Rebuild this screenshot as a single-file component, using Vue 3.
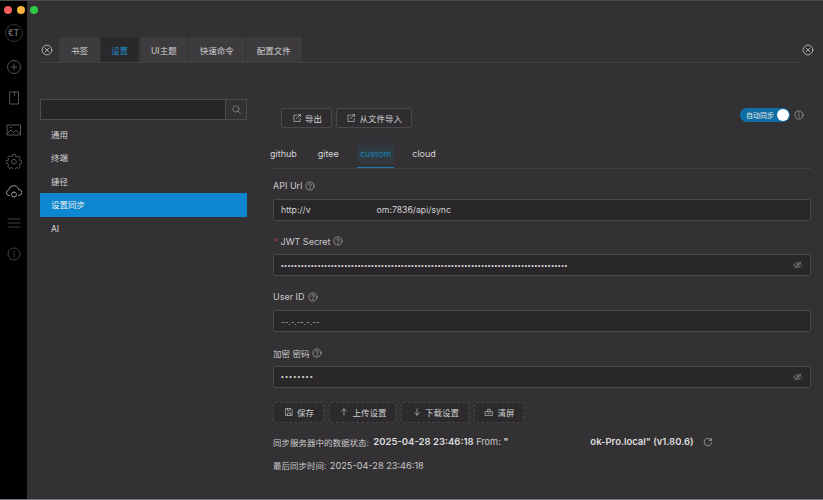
<script setup>
const sideIcons = [
  { d: 'M1.500 8a6.500 6.500 0 1 0 13 0a6.500 6.500 0 1 0-13 0M8 5v6M5 8h6' },
  { d: 'M4 2h8.500v12H4zM8.500 2v3.500' },
  { d: 'M1.500 3h13v10h-13zM1.500 11.500l3.500-3.500 2.500 2.500 2.500-2 4.500 3.500M4.500 5.500h1' },
  { d: 'M6.800 1.500h2.400l.4 1.800 1.400.6 1.600-1 1.700 1.700-1 1.600.6 1.400 1.800.4v2.400l-1.800.4-.6 1.400 1 1.600-1.700 1.700-1.600-1-1.400.6-.4 1.800H6.800l-.4-1.800-1.400-.6-1.600 1-1.700-1.700 1-1.600-.6-1.400-1.800-.4V7.800l1.800-.4.6-1.400-1-1.600 1.700-1.700 1.600 1 1.400-.6zM8 6.300a2.400 2.400 0 1 0 0 4.800a2.400 2.400 0 1 0 0-4.800' },
  { d: 'M3.500 11.500H3a2.800 2.800 0 0 1-.3-5.500A5 5 0 0 1 12.500 5.500a2.800 2.800 0 0 1 .5 6h-.5M8 8a2.500 2.500 0 1 0 0 5a2.500 2.500 0 1 0 0-5', active: true },
  { d: 'M2 4h12M2 8h12M2 12h12', dim: true },
  { d: 'M2 8a6 6 0 1 0 12 0a6 6 0 1 0-12 0M8 7.500v3.500M8 5v.8', dim: true }
]
const tabs = ['书签', '设置', 'UI主题', '快速命令', '配置文件']
const menu = ['通用', '终端', '捷径', '设置同步', 'AI']
const providers = ['github', 'gitee', 'custom', 'cloud']
const secret = '•'.repeat(86)
const password = '•'.repeat(8)
const actions = [
  { label: '保存', d: 'M3 2.500h8l2 2v9H3zM5.500 2.500v3h4v-3M5.500 13.500v-4h5v4' },
  { label: '上传设置', d: 'M8 13V3M4 7l4-4 4 4' },
  { label: '下载设置', d: 'M8 3v10M4 9l4 4 4-4' },
  { label: '清屏', d: 'M2.500 7h11v6.500h-11zM6 7V3.500h4V7M6 10h4' }
]
</script>

<template>
  <div class="window">
    <div class="lights">
      <i class="red" />
      <i class="yellow" />
      <i class="green" />
    </div>
    <aside class="rail">
      <div class="logo">€T</div>
      <svg v-for="ic in sideIcons" :key="ic.d" class="rail-icon" :class="{ active: ic.active, dim: ic.dim }" viewBox="0 0 16 16">
        <path :d="ic.d" />
      </svg>
    </aside>
    <main class="main">
      <header class="tabbar">
        <svg class="close" viewBox="0 0 16 16">
          <circle cx="8" cy="8" r="6.500" />
          <path d="M5.500 5.500l5 5M10.500 5.500l-5 5" />
        </svg>
        <div class="tabs">
          <div v-for="t in tabs" :key="t" class="tab" :class="{ active: t === '设置' }">{{ t }}</div>
        </div>
        <svg class="close close-right" viewBox="0 0 16 16">
          <circle cx="8" cy="8" r="6.500" />
          <path d="M5.500 5.500l5 5M10.500 5.500l-5 5" />
        </svg>
      </header>

      <div class="body">
        <nav class="left">
          <div class="search">
            <div class="search-input" />
            <div class="search-btn">
              <svg viewBox="0 0 16 16"><circle cx="7" cy="7" r="4.500" /><path d="M10.500 10.500l3.500 3.500" /></svg>
            </div>
          </div>
          <ul class="menu">
            <li v-for="m in menu" :key="m" :class="{ selected: m === '设置同步' }">{{ m }}</li>
          </ul>
        </nav>

        <section class="right">
          <div class="toolbar">
            <div class="toolbar-btns">
              <button class="btn solid">
                <svg viewBox="0 0 16 16"><path d="M13 9v4.500H3v-10h5M7 9l6.500-6.500M10 2.500h3.500V6" /></svg>导出
              </button>
              <button class="btn solid">
                <svg viewBox="0 0 16 16"><path d="M13 9v4.500H3v-10h5M7 9l6.500-6.500M10 2.500h3.500V6" /></svg>从文件导入
              </button>
            </div>
            <div class="auto-sync">
              <div class="switch"><span>自动同步</span><i /></div>
              <svg class="hint" viewBox="0 0 16 16"><circle cx="8" cy="8" r="6.500" /><path d="M8 7.500v3.500M8 4.500v1" /></svg>
            </div>
          </div>

          <div class="providers">
            <div v-for="p in providers" :key="p" class="provider" :class="{ active: p === 'custom' }">{{ p }}</div>
          </div>

          <form class="form" @submit.prevent>
            <label>API Url<svg class="help" viewBox="0 0 16 16"><circle cx="8" cy="8" r="6.500" /><path d="M6 6.300a2 2 0 1 1 3 1.700c-.7.400-1 .8-1 1.500M8 11.300v.8" /></svg></label>
            <div class="field">http://v<span class="mask url-mask" />om:7836/api/sync</div>

            <label><em>*</em>JWT Secret<svg class="help" viewBox="0 0 16 16"><circle cx="8" cy="8" r="6.500" /><path d="M6 6.300a2 2 0 1 1 3 1.700c-.7.400-1 .8-1 1.500M8 11.300v.8" /></svg></label>
            <div class="field secret">
              <span class="dots">{{ secret }}</span>
              <svg class="eye" viewBox="0 0 16 16"><path d="M1.500 8s2.500-4 6.500-4 6.500 4 6.500 4-2.500 4-6.500 4-6.500-4-6.500-4zM6 8a2 2 0 1 0 4 0a2 2 0 1 0-4 0M3 13L13 3" /></svg>
            </div>

            <label>User ID<svg class="help" viewBox="0 0 16 16"><circle cx="8" cy="8" r="6.500" /><path d="M6 6.300a2 2 0 1 1 3 1.700c-.7.400-1 .8-1 1.500M8 11.300v.8" /></svg></label>
            <div class="field"><span class="scrap">--.-.--.-.--</span></div>

            <label class="cjk">加密 密码<svg class="help" viewBox="0 0 16 16"><circle cx="8" cy="8" r="6.500" /><path d="M6 6.300a2 2 0 1 1 3 1.700c-.7.400-1 .8-1 1.500M8 11.300v.8" /></svg></label>
            <div class="field secret">
              <span class="dots wide">{{ password }}</span>
              <svg class="eye" viewBox="0 0 16 16"><path d="M1.500 8s2.500-4 6.500-4 6.500 4 6.500 4-2.500 4-6.500 4-6.500-4-6.500-4zM6 8a2 2 0 1 0 4 0a2 2 0 1 0-4 0M3 13L13 3" /></svg>
            </div>
          </form>

          <div class="actions">
            <button v-for="a in actions" :key="a.label" class="btn dashed">
              <svg viewBox="0 0 16 16"><path :d="a.d" /></svg>{{ a.label }}
            </button>
          </div>

          <p class="status">
            <span class="cjk">同步服务器中的数据状态: </span><b class="date">2025-04-28 23:46:18</b> From: <b>"<span class="mask from-mask" />ok-Pro.local" (v1.80.6)</b>
            <svg class="refresh" viewBox="0 0 16 16"><path d="M13 5a6 6 0 1 0 .8 4M13.500 2v3.500H10" /></svg>
          </p>
          <p class="last"><span class="cjk">最后同步时间: </span>2025-04-28 23:46:18</p>
        </section>
      </div>
    </main>
  </div>
</template>

<style>
html, body {
  margin: 0;
  background: #333134;
}
</style>

<style scoped>
.window {
  display: flex;
  width: 823px;
  height: 500px;
  overflow: hidden;
  position: relative;
  background: #333134;
  color: #d6d6d6;
  font-family: "Inter", "Noto Sans CJK SC", sans-serif;
  font-size: 8.500px;
  box-sizing: border-box;
  border-top: 1px solid #4a484b;
  border-bottom: 1px solid #77767a;
}

svg {
  fill: none;
  stroke: currentColor;
  stroke-width: 1;
  stroke-linecap: round;
  stroke-linejoin: round;
  flex: none;
}

.cjk {
  font-size: 8.500px;
}

.lights {
  position: absolute;
  left: 4px;
  top: 5px;
  display: flex;
  gap: 5px;
  z-index: 1;
}

.lights i {
  width: 8px;
  height: 8px;
  border-radius: 50%;
}

.red { background: #ee5f5b; }
.yellow { background: #f4b63c; }
.green { background: #33c748; }

.rail {
  width: 27px;
  flex: none;
  background: #000;
  display: flex;
  flex-direction: column;
  align-items: center;
  padding-top: 23px;
  gap: 15.200px;
  color: #565656;
  box-sizing: border-box;
}

.logo {
  width: 18px;
  height: 18px;
  border: 1px solid #333;
  border-radius: 50%;
  box-sizing: border-box;
  display: flex;
  align-items: center;
  justify-content: center;
  font-size: 8.500px;
  font-weight: 700;
  color: #666;
  margin-bottom: 2px;
}

.rail-icon {
  width: 16px;
  height: 16px;
}

.rail-icon.active {
  color: #999;
}

.rail-icon.dim {
  color: #3f3f3f;
}

.main {
  flex: 1;
  min-width: 0;
}

.tabbar {
  display: flex;
  align-items: center;
  margin: 36px 22px 0 14px;
  height: 25px;
  position: relative;
  border-bottom: 1px solid #413f42;
}

.close {
  width: 12px;
  height: 12px;
  color: #d0d0d0;
}

.close-right {
  position: absolute;
  right: -13px;
  top: 7px;
}

.tabs {
  display: flex;
  gap: 1px;
  margin-left: 6px;
  align-self: stretch;
}

.tab {
  display: flex;
  align-items: center;
  justify-content: center;
  background: #3d3b3e;
  padding: 0 11px;
  color: #cfcfcf;
  border-radius: 2px 2px 0 0;
}

.tab:first-child {
  padding: 0 12px;
}

.tab.active {
  background: #2a282b;
  color: #1a8ec8;
  padding: 0 10px;
  margin-right: 1px;
}

.body {
  display: flex;
  padding-left: 13px;
  margin-top: 36px;
}

.left {
  width: 207px;
  flex: none;
}

.search {
  display: flex;
  height: 21px;
  border: 1px solid #4d4b4e;
  box-sizing: border-box;
}

.search-input {
  flex: 1;
  background: #272528;
}

.search-btn {
  width: 20px;
  border-left: 1px solid #4d4b4e;
  display: flex;
  align-items: center;
  justify-content: center;
  color: #8f8f8f;
}

.search-btn svg {
  width: 11px;
  height: 11px;
}

.menu {
  list-style: none;
  margin: 3px 0 0;
  padding: 0;
}

.menu li {
  height: 23.400px;
  line-height: 25px;
  padding-left: 11px;
  color: #d8d8d8;
}

.menu li.selected {
  background: #0c86cf;
  color: #f2f2f2;
}

.right {
  width: 541px;
  margin-left: 23px;
  flex: none;
}

.toolbar {
  display: flex;
  justify-content: space-between;
  align-items: flex-start;
  padding: 9px 7px 0 11px;
  height: 32px;
}

.toolbar-btns {
  display: flex;
  gap: 4px;
}

.btn {
  display: flex;
  align-items: center;
  justify-content: center;
  gap: 3.500px;
  height: 20px;
  padding: 0 8.500px 0 9.500px;
  background: #2f2d30;
  border: 1px solid #49474a;
  border-radius: 2px;
  color: #d0d0d0;
  font: inherit;
}

.btn svg {
  width: 10px;
  height: 10px;
}

.auto-sync {
  display: flex;
  align-items: center;
  gap: 4px;
  color: #bdbdbd;
}

.switch {
  display: flex;
  align-items: center;
  justify-content: space-between;
  width: 50px;
  height: 14px;
  border-radius: 7px;
  background: #0f6ea6;
  color: #e8e8e8;
  font-size: 7px;
  padding: 0 1px 0 6px;
  box-sizing: border-box;
}

.switch span {
  white-space: nowrap;
}

.switch i {
  width: 12px;
  height: 12px;
  border-radius: 50%;
  background: #fff;
  flex: none;
}

.hint {
  width: 10px;
  height: 10px;
}

.providers {
  display: flex;
  gap: 21px;
  height: 29px;
  border-bottom: 1px solid #413f42;
  box-sizing: border-box;
  font-size: 9px;
  align-items: stretch;
}

.provider {
  display: flex;
  align-items: center;
  padding-bottom: 1px;
}

.provider.active {
  color: #1a7fae;
  border-bottom: 1px solid #1a7fae;
  padding: 0 3px;
  margin: 0 -3px;
  background: linear-gradient(#333134, #2f3d47 50%, #333134);
}

.form {
  padding-left: 3px;
}

.form label {
  display: flex;
  align-items: center;
  height: 13px;
  margin-top: 10px;
  color: #c9c9c9;
  font-size: 9px;
  margin-bottom: 6.500px;
}

.form label.cjk {
  font-size: 8.500px;
}

.form em {
  color: #b13a4a;
  margin-right: 3px;
  font-style: normal;
}

.help {
  width: 10px;
  height: 10px;
  margin-left: 3px;
  color: #bbb;
}

.field {
  display: flex;
  align-items: center;
  height: 22px;
  padding: 0 7px;
  background: #29272a;
  border: 1px solid #4a484b;
  border-radius: 2px;
  box-sizing: border-box;
  color: #d4d4d4;
  font-size: 8.700px;
  margin-bottom: 14.200px;
}

.form .field:last-child {
  margin-bottom: 0;
}

.mask {
  display: inline-block;
}

.url-mask {
  width: 66px;
}

.from-mask {
  width: 82px;
}

.secret {
  justify-content: space-between;
}

.dots {
  letter-spacing: 0.710px;
  font-size: 7.500px;
  white-space: nowrap;
  font-family: "Liberation Sans", sans-serif;
}

.dots.wide {
  letter-spacing: 1.500px;
}

.eye {
  width: 10px;
  height: 10px;
  color: #8a8a8a;
}

.scrap {
  font-size: 8px;
  color: #b0b0b0;
  padding-top: 3px;
}

.actions {
  display: flex;
  gap: 5px;
  margin-top: 14px;
  padding-left: 3px;
}

.btn.dashed {
  border: 1px dashed #474548;
  background: #2c2a2d;
  height: 21px;
}

.status,
.last {
  margin: 0;
  padding-left: 3px;
  color: #c9c9c9;
  white-space: nowrap;
  font-size: 9.200px;
}

.status {
  margin-top: 13px;
  display: flex;
  align-items: center;
  white-space: pre;
  height: 12px;
}

.status b {
  font-weight: 600;
  font-size: 9.500px;
  color: #dcdcdc;
}

.status .date {
  margin-left: 2px;
}

.refresh {
  width: 10px;
  height: 10px;
  margin-left: 9px;
}

.last {
  margin-top: 11px;
}

.last .cjk {
  margin-right: 1px;
}
</style>
